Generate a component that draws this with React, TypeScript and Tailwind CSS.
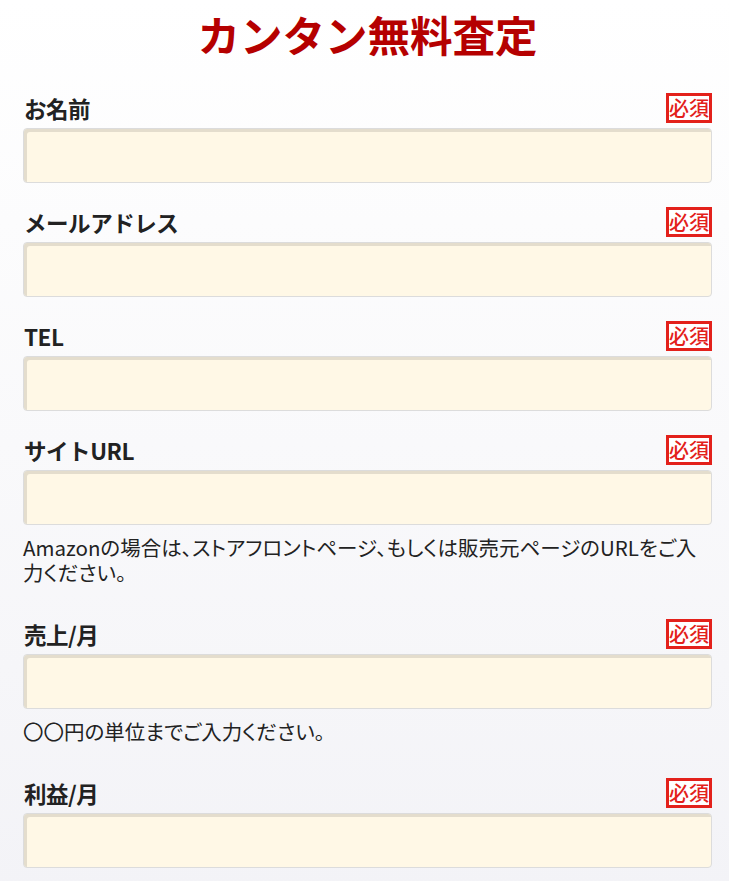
const fields = [
  { label: "お名前" },
  { label: "メールアドレス" },
  { label: "TEL" },
  {
    label: "サイトURL",
    note: "Amazonの場合は、ストアフロントページ、もしくは販売元ページのURLをご入力ください。",
  },
  { label: "売上/月", note: "〇〇円の単位までご入力ください。" },
  { label: "利益/月" },
];

function Field({ label, note }: { label: string; note?: string }) {
  return (
    <div className="flex flex-col pb-[24px]">
      <div className="flex h-[30px] items-center justify-between">
        <label className="pl-px text-[22.5px] font-bold leading-none tracking-[-0.02em] text-[#222]">
          {label}
        </label>
        <span className="flex h-[30px] items-center border-[3px] border-[#e3211b] bg-white text-[20px] font-medium leading-none text-[#e3211b]">
          必須
        </span>
      </div>
      <input
        type="text"
        className="mt-[5px] block h-[55px] w-full rounded-[4px] border border-[#dcdcdc] bg-[#fff8e6] shadow-[inset_3px_3px_0_#e4ddcd] outline-none"
      />
      {note && (
        <p className="pt-[10px] pb-[10px] text-[20.5px] leading-[25px] text-[#222] [font-feature-settings:'palt']">
          {note}
        </p>
      )}
    </div>
  );
}

export default function App() {
  return (
    <div className="min-h-[881px] bg-gradient-to-b from-[#ffffff] to-[#f3f3f7] pl-[23px] pr-[17px] font-['Noto_Sans_CJK_JP','Noto_Sans',sans-serif]">
      <h1 className="pt-[6px] pb-[31px] text-center text-[42.5px] font-bold leading-[56px] text-[#b50000]">
        カンタン無料査定
      </h1>
      {fields.map((f) => (
        <Field key={f.label} {...f} />
      ))}
    </div>
  );
}
